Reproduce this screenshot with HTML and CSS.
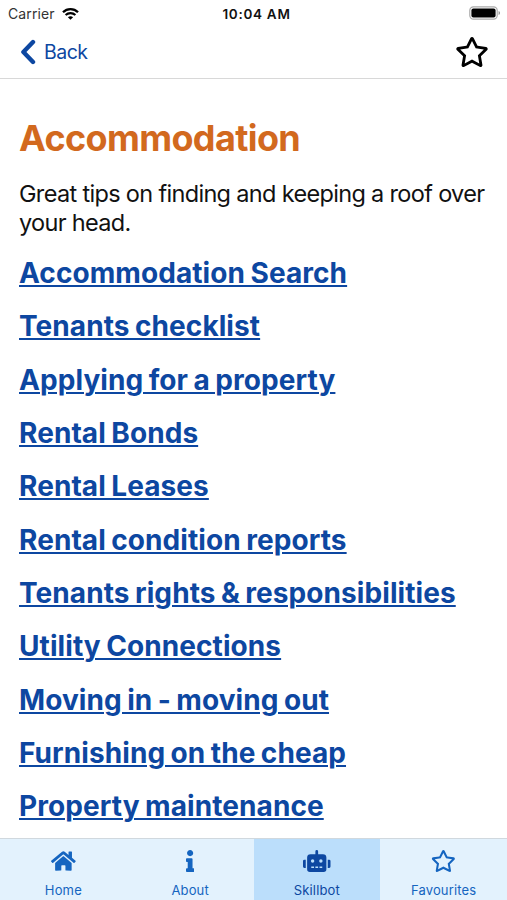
FILE: index.html
```html
<!DOCTYPE html>
<html lang="en">
<head>
    <meta charset="UTF-8">
    <meta name="viewport" content="width=device-width, initial-scale=1.0">
    <title>Accommodation</title>
    <link rel="stylesheet" href="styles.css">
</head>
<body>
    <div class="status-bar">
        <div class="carrier">
            <span>Carrier</span>
            <svg class="wifi" viewBox="0 0 17 13">
                <path d="M1 5.2C5.2 1 11.8 1 16 5.2" fill="none" stroke="#000" stroke-width="2.3"/>
                <path d="M3.6 8.1C6.4 5.4 10.6 5.4 13.4 8.1" fill="none" stroke="#000" stroke-width="2.1"/>
                <path d="M8.5 12.8L5.9 10.2C7.4 8.8 9.6 8.8 11.1 10.2Z"/>
            </svg>
        </div>
        <div class="clock">10:04 AM</div>
        <svg class="battery" viewBox="0 0 32 14">
            <rect x="0.8" y="0.8" width="27.4" height="12.4" rx="3.6" fill="#fff" stroke="#aaa" stroke-width="1.2"/>
            <rect x="2.4" y="2.4" width="24.2" height="9.2" rx="2"/>
            <path d="M29.6 5V9C31.4 8.4 31.4 5.6 29.6 5Z" fill="#888"/>
        </svg>
    </div>

    <div class="nav-bar">
        <a class="back" href="#">
            <svg class="chevron" viewBox="0 0 16 26">
                <path d="M13 3L3.4 13L13 23" fill="none" stroke="currentColor" stroke-width="4.4" stroke-linecap="round" stroke-linejoin="round"/>
            </svg>
            <span>Back</span>
        </a>
        <svg class="favourite" viewBox="0 0 576 512">
            <path d="M528.1 171.5L382 150.2 316.7 17.8c-11.7-23.6-45.6-23.9-57.4 0L194 150.2 47.9 171.5c-26.2 3.8-36.7 36.1-17.7 54.6l105.7 103-25 145.5c-4.5 26.3 23.2 46 46.4 33.7L288 439.6l130.7 68.7c23.2 12.2 50.9-7.4 46.4-33.7l-25-145.5 105.7-103c19-18.5 8.5-50.8-17.7-54.6zM388.6 312.3l23.7 138.4L288 385.4l-124.3 65.3 23.7-138.4-100.6-98 139-20.2 62.2-126 62.2 126 139 20.2-100.6 98z"/>
        </svg>
    </div>

    <div class="content">
        <h1>Accommodation</h1>
        <p>Great tips on finding and keeping a roof over your head.</p>
        <ul class="topics">
            <li><a href="#">Accommodation Search</a></li>
            <li><a href="#">Tenants checklist</a></li>
            <li><a href="#">Applying for a property</a></li>
            <li><a href="#">Rental Bonds</a></li>
            <li><a href="#">Rental Leases</a></li>
            <li><a href="#">Rental condition reports</a></li>
            <li><a href="#">Tenants rights &amp; responsibilities</a></li>
            <li><a href="#">Utility Connections</a></li>
            <li><a href="#">Moving in - moving out</a></li>
            <li><a href="#">Furnishing on the cheap</a></li>
            <li><a href="#">Property maintenance</a></li>
        </ul>
    </div>

    <div class="tab-bar">
        <a class="tab" href="#">
            <svg viewBox="0 0 576 512">
                <path d="M280.37 148.26L96 300.11V464a16 16 0 0 0 16 16l112.06-.29a16 16 0 0 0 15.92-16V368a16 16 0 0 1 16-16h64a16 16 0 0 1 16 16v95.64a16 16 0 0 0 16 16.05L464 480a16 16 0 0 0 16-16V300L295.67 148.26a12.19 12.19 0 0 0-15.3 0zM571.6 251.47L488 182.56V44.05a12 12 0 0 0-12-12h-56a12 12 0 0 0-12 12v72.61L318.47 43a48 48 0 0 0-61 0L4.34 251.47a12 12 0 0 0-1.6 16.9l25.5 31A12 12 0 0 0 45.15 301l235.22-193.74a12.19 12.19 0 0 1 15.3 0L530.9 301a12 12 0 0 0 16.9-1.6l25.5-31a12 12 0 0 0-1.7-16.93z"/>
            </svg>
            <span>Home</span>
        </a>
        <a class="tab" href="#">
            <svg viewBox="0 0 192 512">
                <path d="M20 424.229h20V279.771H20c-11.046 0-20-8.954-20-20V212c0-11.046 8.954-20 20-20h112c11.046 0 20 8.954 20 20v212.229h20c11.046 0 20 8.954 20 20V492c0 11.046-8.954 20-20 20H20c-11.046 0-20-8.954-20-20v-47.771c0-11.046 8.954-20 20-20zM96 0C56.235 0 24 32.235 24 72s32.235 72 72 72 72-32.235 72-72S135.764 0 96 0z"/>
            </svg>
            <span>About</span>
        </a>
        <a class="tab active" href="#">
            <svg viewBox="0 0 640 512">
                <path d="M32,224H64V416H32A31.96,31.96,0,0,1,0,384V256A31.96,31.96,0,0,1,32,224Zm512-48V448a64.06,64.06,0,0,1-64,64H160a64.06,64.06,0,0,1-64-64V176a79.97,79.97,0,0,1,80-80H288V32a32,32,0,0,1,64,0V96H464A79.97,79.97,0,0,1,544,176ZM264,256a40,40,0,1,0-40,40A40,40,0,0,0,264,256Zm-8,128H192v32h64Zm96,0H288v32h64ZM456,256a40,40,0,1,0-40,40A40,40,0,0,0,456,256Zm-8,128H384v32h64ZM640,256V384a31.96,31.96,0,0,1-32,32H576V224h32A31.96,31.96,0,0,1,640,256Z"/>
            </svg>
            <span>Skillbot</span>
        </a>
        <a class="tab" href="#">
            <svg viewBox="0 0 576 512">
                <path d="M528.1 171.5L382 150.2 316.7 17.8c-11.7-23.6-45.6-23.9-57.4 0L194 150.2 47.9 171.5c-26.2 3.8-36.7 36.1-17.7 54.6l105.7 103-25 145.5c-4.5 26.3 23.2 46 46.4 33.7L288 439.6l130.7 68.7c23.2 12.2 50.9-7.4 46.4-33.7l-25-145.5 105.7-103c19-18.5 8.5-50.8-17.7-54.6zM388.6 312.3l23.7 138.4L288 385.4l-124.3 65.3 23.7-138.4-100.6-98 139-20.2 62.2-126 62.2 126 139 20.2-100.6 98z"/>
            </svg>
            <span>Favourites</span>
        </a>
    </div>
</body>
</html>
```
FILE: styles.css
```css
* {
    box-sizing: border-box;
}
body {
    font-family: Inter, "Liberation Sans", sans-serif;
    margin: 0;
    height: 900px;
    display: flex;
    flex-direction: column;
    background-color: #fff;
    color: #111;
    overflow: hidden;
}
a {
    color: #0d47a1;
}
.status-bar {
    display: grid;
    grid-template-columns: 1fr auto 1fr;
    align-items: center;
    height: 27px;
    padding: 0 6px 0 8px;
    font-size: 14px;
    flex: none;
}
.carrier {
    display: flex;
    align-items: center;
    gap: 7px;
    color: #333;
    letter-spacing: 0.1px;
}
.wifi {
    width: 17px;
    height: 13px;
}
.clock {
    margin-left: 4px;
    font-size: 13.5px;
    font-weight: 600;
    letter-spacing: 0.7px;
}
.battery {
    width: 32px;
    height: 14px;
    justify-self: end;
    margin-top: -1px;
}
.nav-bar {
    display: flex;
    align-items: center;
    justify-content: space-between;
    height: 52px;
    padding: 0 18px 2px 20px;
    border-bottom: 1px solid #d8d8d8;
    flex: none;
}
.back {
    display: flex;
    align-items: center;
    gap: 8px;
    font-size: 19.5px;
    letter-spacing: -0.5px;
    text-decoration: none;
}
.chevron {
    width: 16px;
    height: 26px;
}
.favourite {
    width: 34px;
    height: 30px;
}
.content {
    flex: 1;
    min-height: 0;
    padding: 37px 19px 0;
    overflow: hidden;
}
h1 {
    margin: 0;
    font-size: 36px;
    line-height: 44px;
    font-weight: 700;
    letter-spacing: -0.63px;
    color: #d2691e;
}
p {
    margin: 19px 0 0;
    font-size: 23.5px;
    line-height: 29px;
    letter-spacing: -0.67px;
}
.topics {
    list-style: none;
    margin: 10px 0 0;
    padding: 0;
}
.topics li {
    height: 53.33px;
    line-height: 53.33px;
    font-size: 28px;
    font-weight: 700;
    letter-spacing: 0.08px;
    word-spacing: -1.3px;
    white-space: nowrap;
}
.topics a {
    text-decoration-thickness: 2px;
    text-underline-offset: 2px;
}
.tab-bar {
    display: grid;
    grid-template-columns: repeat(4, 1fr);
    height: 62px;
    border-top: 1px solid #d0d8de;
    background-color: #e3f2fd;
    flex: none;
}
.tab {
    display: flex;
    flex-direction: column;
    align-items: center;
    padding-top: 11px;
    gap: 10px;
    font-size: 13px;
    line-height: 16px;
    letter-spacing: 0.15px;
    color: #1565c0;
    text-decoration: none;
}
.tab svg {
    height: 22px;
    fill: currentColor;
}
.tab.active {
    background-color: #bbdefb;
    color: #0d47a1;
}
```
